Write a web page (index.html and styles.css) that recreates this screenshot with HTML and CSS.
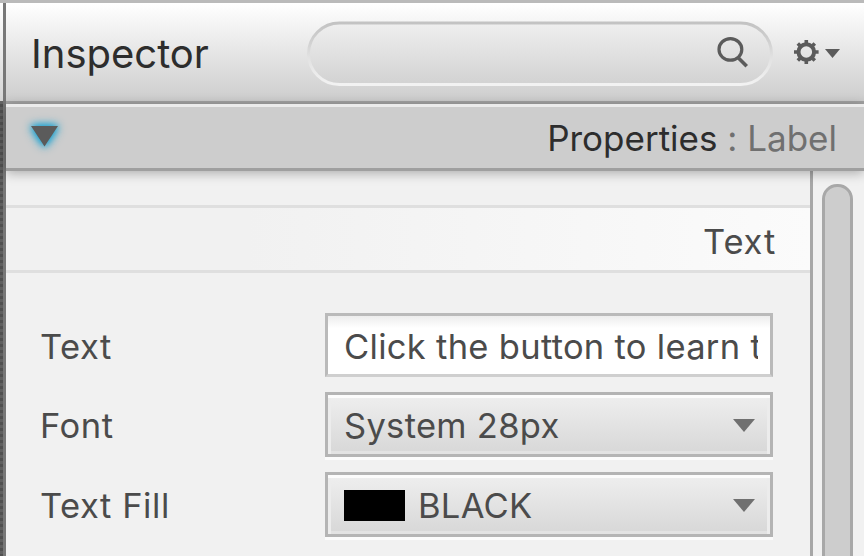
FILE: index.html
```html
<!DOCTYPE html>
<html lang="en">
<head>
<meta charset="utf-8">
<title>Inspector</title>
<link rel="stylesheet" href="styles.css">
</head>
<body>
<div class="window">
  <div class="gutter"><div class="gutter-top"></div><div class="gutter-body"></div></div>
  <main class="panel">
    <header class="toolbar">
      <h1 class="title">Inspector</h1>
      <div class="search">
        <svg class="search-frame" width="466" height="65" viewBox="0 0 466 65">
          <defs>
            <linearGradient id="edge" x1="0" y1="0" x2="0" y2="1"><stop offset="0" stop-color="#c3c3c3"/><stop offset=".3" stop-color="#d0d0d0"/><stop offset=".55" stop-color="#e1e1e1"/><stop offset="1" stop-color="#f2f2f2"/></linearGradient>
            <linearGradient id="fill" x1="0" y1="0" x2="0" y2="1"><stop offset="0" stop-color="#efefef"/><stop offset="1" stop-color="#d2d2d2"/></linearGradient>
          </defs>
          <rect x="1.5" y="2" width="463" height="61.5" rx="31" fill="url(#fill)" stroke="url(#edge)" stroke-width="3"/>
        </svg>
        <svg class="lens" width="32" height="32" viewBox="0 0 32 32" fill="none" stroke="#5b5b5b"><ellipse cx="13.4" cy="13.4" rx="11.4" ry="10.8" stroke-width="3.2"/><path d="M20.5 21L29.7 30.2" stroke-width="3.6"/></svg>
      </div>
      <svg class="gear" width="46" height="24" viewBox="0 0 46 24"><g fill="none" stroke="#5b5b5b"><circle cx="12.3" cy="12" r="7.8" stroke-width="4"/><path d="M12.3 0V4M12.3 20V24M0 12H4.3M20.3 12H24.6M3.8 3.5L6.6 6.3M18 17.7L20.8 20.5M20.8 3.5L18 6.3M6.6 17.7L3.8 20.5" stroke-width="3.6"/></g><path d="M31 9H46L38.5 18Z" fill="#5b5b5b"/></svg>
    </header>
    <div class="accordion">
      <svg class="disclosure" width="27" height="20.5" viewBox="0 0 28 21" preserveAspectRatio="none"><path d="M0 0H28L14 21Z" fill="#5b5b5b"/></svg>
      <div class="heading">Properties <span class="kind">: Label</span></div>
    </div>
    <div class="body">
      <section class="content">
        <h2 class="section">Text</h2>
        <div class="form">
          <span class="label">Text</span>
          <div class="field input"><span class="clip">Click the button to learn t</span></div>
          <span class="label">Font</span>
          <div class="field combo"><span class="value">System 28px</span><svg width="22" height="13" viewBox="0 0 22 13"><path d="M0 0H22L11 13Z" fill="#707070"/></svg></div>
          <span class="label">Text Fill</span>
          <div class="field combo"><i class="swatch"></i><span class="value">BLACK</span><svg width="22" height="13" viewBox="0 0 22 13"><path d="M0 0H22L11 13Z" fill="#707070"/></svg></div>
        </div>
      </section>
      <aside class="scroll"><div class="thumb"></div></aside>
    </div>
  </main>
</div>
</body>
</html>
```
FILE: styles.css
```css
* { box-sizing: border-box; }
body { margin: 0; overflow: hidden; font-family: Inter, "Liberation Sans", sans-serif; font-weight: 430; font-feature-settings: "calt" 0; color: #4b4b4b; }
h1, h2 { margin: 0; font-weight: 430; }
svg { display: block; flex: none; }
.window { width: 864px; height: 556px; display: flex; border-top: 3px solid #bababa; background: #f1f1f1; }
.gutter { width: 6px; border-right: 3px solid #787878; display: flex; flex-direction: column; }
.gutter-top { height: 98px; background: linear-gradient(#fff, #d5d5d5); }
.gutter-body { flex: 1; background: repeating-linear-gradient(#505050 0 3px, #606060 3px 6px); border-top: 3px solid #666; }
.panel { flex: 1; min-width: 0; display: flex; flex-direction: column; }
.toolbar { height: 101px; flex: none; display: flex; align-items: flex-start; background: linear-gradient(#fff, #cdcdcd); border-bottom: 3px solid #a3a3a3; padding-left: 25px; }
.title { width: 276px; margin-top: 26px; font-size: 40px; line-height: 50px; color: #2d2d2d; }
.search { position: relative; width: 466px; height: 65px; margin-top: 18px; }
.lens { position: absolute; left: 410px; top: 15px; }
.gear { margin: 37px 0 0 21px; }
.accordion { height: 67px; flex: none; display: flex; justify-content: space-between; background: #cdcdcd; border-top: 3px solid #ebebeb; border-bottom: 3px solid #9f9f9f; padding: 0 27px 0 25px; box-shadow: 0 2px 11px rgba(0,0,0,.3); z-index: 1; }
.disclosure { overflow: visible; margin-top: 19px; filter: drop-shadow(0 0 4px #169fd0) drop-shadow(0 0 3px #38a9cf); }
.heading { font-size: 35px; line-height: 42px; margin-top: 10px; color: #2d2d2d; white-space: nowrap; }
.kind { color: #707070; }
.body { flex: 1; display: flex; min-height: 0; }
.content { width: 807px; border-right: 3px solid #a7a7a7; padding-top: 34px; }
.section { height: 68px; border: solid #dfdfdf; border-width: 3px 0; padding: 13px 34px 0 0; text-align: right; font-size: 34.5px; line-height: 42px; letter-spacing: .8px; background: linear-gradient(90deg, #f1f1f1 30%, #fbfbfb); }
.form { display: grid; grid-template-columns: 284px 448px; grid-template-rows: 64px 65px 65px; row-gap: 15px; padding: 40px 0 0 35px; }
.label { align-self: center; font-size: 34.5px; line-height: 42px; letter-spacing: .55px; padding-top: 3px; margin-left: -1px; }
.field { display: flex; align-items: center; font-size: 34.5px; line-height: 42px; letter-spacing: .3px; white-space: nowrap; }
.input { border: 3px solid #bababa; border-bottom-color: #cfcfcf; background: linear-gradient(#ededed, #fff 12px); padding: 3px 11px 0 16px; }
.clip { overflow: hidden; width: 414px; }
.combo { border: 3px solid #b4b4b4; background: linear-gradient(#efefef, #d7d7d7); box-shadow: inset 0 3px #fcfcfc, inset 3px 0 #ececec, inset -3px 0 #ececec, inset 0 -3px #e2e2e2, 0 3px #fbfbfb; padding: 0 15px 0 16px; }
.combo svg { margin-top: 2px; }
.value { flex: 1; padding-top: 3px; }
.swatch { width: 61px; height: 31px; background: #000; margin: 2px 13px 0 0; }
.scroll { flex: 1; padding: 13px 11px 0 9px; overflow: hidden; }
.thumb { width: 31px; height: 400px; border: 3px solid #a8a8a8; border-radius: 15px; background: #cdcdcd; }
```
